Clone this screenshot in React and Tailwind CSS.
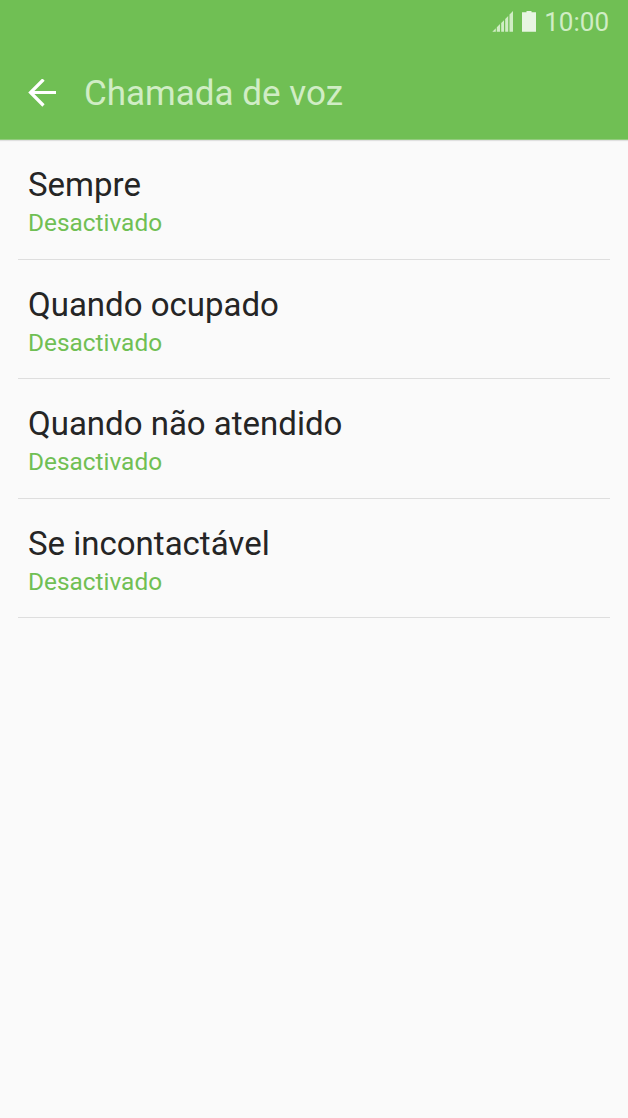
import React from 'react';

const options = [
  { title: 'Sempre', status: 'Desactivado' },
  { title: 'Quando ocupado', status: 'Desactivado' },
  { title: 'Quando não atendido', status: 'Desactivado' },
  { title: 'Se incontactável', status: 'Desactivado' },
];

export default function App() {
  return (
    <div className="h-[1118px] w-[628px] overflow-hidden bg-[#fafafa] font-[Roboto,sans-serif]">
      {/* Header */}
      <header className="h-[140px] border-b border-[#93cb7e] bg-[#70bf54] text-[#d0edc5] shadow-[0_1px_1px_#e0e0e0]">
        <div className="flex h-11 items-center justify-end pr-[19px]">
          <svg className="h-[22px] w-[22px]" viewBox="0 0 22 22" fill="currentColor">
            <path d="M.3 20.8 3.8 17.3v3.5zM4.8 16.3 8 13v7.8H4.8zM9.2 12l2.8-2.8v11.6H9.2zM13.2 8l3-3v15.8h-3zM17.5 3.5 21 0v20.8h-3.5z" />
          </svg>
          <svg className="ml-2 h-[22px] w-[14px]" viewBox="0 0 14 22" fill="#e8f5e2">
            <path d="M4.5-.5h5v1.7H14v19.6H0V1.2h4.5z" />
          </svg>
          <span className="ml-2 text-[26px] leading-none">10:00</span>
        </div>
        <div className="flex h-24 items-center pl-7 pt-px">
          <svg className="h-7 w-7" viewBox="0 0 28 28" fill="none" stroke="#ffffff" strokeWidth="3.2">
            <path d="M28 13.5H3M15.5.5 2.5 13.5l13 13" />
          </svg>
          <h1 className="ml-7 pt-px text-[35px] leading-none">Chamada de voz</h1>
        </div>
      </header>

      {/* Forwarding options */}
      <main className="px-[18px]">
        {options.map(o => (
          <div key={o.title} className="h-[119.6px] border-b border-[#dedede] px-[10px] pt-[25px]">
            <p className="text-[33px] leading-10 text-[#252525]">{o.title}</p>
            <p className="text-[24.4px] leading-9 text-[#70bf54]">{o.status}</p>
          </div>
        ))}
      </main>
    </div>
  );
}
